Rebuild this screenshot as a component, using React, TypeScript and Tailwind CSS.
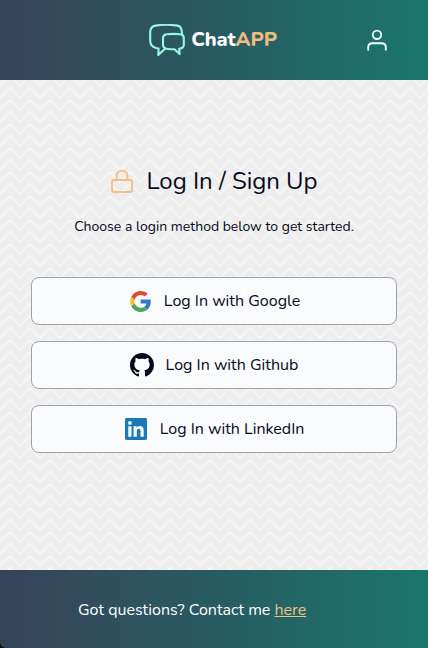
import React from "react";

function ChatLogo() {
  return (
    <svg className="h-8 w-[36px] shrink-0" viewBox="0 0 36 32" fill="none" stroke="#99f6e4" strokeWidth="2.100" strokeLinejoin="round" strokeLinecap="round">
      <path d="M33 9.500C32.800 4 31.500 2 28.500 1.600C21.500 .7 12 .7 6.500 1.600C3 2.200 1.300 4.500 1.200 8V16.500C1.200 20.500 3.200 23 7 24L9.600 24.500L9.300 31L16 24.800" />
      <path d="M17.500 10.200Q24.500 9.500 31.500 10.200Q34.800 10.800 34.800 14V21Q34.800 24 30.200 24.800L30.600 30L25.500 25.300Q21 25.300 17.500 24.700Q14 24 14 20.800V14Q14 10.800 17.500 10.200Z" />
    </svg>
  );
}

function UserIcon() {
  return (
    <svg className="size-6" viewBox="0 0 24 24" fill="none" stroke="#effffc" strokeWidth="1.900" strokeLinecap="round">
      <circle cx="12" cy="6.800" r="4.200" />
      <path d="M3.200 21.700V19.300Q3.200 15.200 7.500 15.200H16.500Q20.800 15.200 20.800 19.300V21.700" />
    </svg>
  );
}

function LockIcon() {
  return (
    <svg className="size-6 shrink-0" viewBox="0 0 24 24" fill="none" stroke="#f8bd80" strokeWidth="1.800" strokeLinejoin="round">
      <rect x="2" y="11" width="20" height="12" rx="2" />
      <path d="M6.600 11V7a5.400 5.400 0 0 1 10.800 0V11" />
    </svg>
  );
}

function GoogleIcon() {
  return (
    <svg className="size-[21px] shrink-0" viewBox="0 0 256 262">
      <path fill="#2f78c8" d="M255.878 133.451c0-10.734-.871-18.567-2.756-26.690H130.550v48.448h71.947c-1.450 12.040-9.283 30.172-26.690 42.356l-.244 1.622 38.755 30.023 2.685.268c24.659-22.774 38.875-56.282 38.875-96.027" />
      <path fill="#4ba85a" d="M130.550 261.100c35.248 0 64.839-11.605 86.453-31.622l-41.196-31.913c-11.024 7.688-25.820 13.055-45.257 13.055-34.523 0-63.824-22.773-74.269-54.250l-1.531.130-40.298 31.187-.527 1.465C35.393 231.798 79.490 261.100 130.550 261.100" />
      <path fill="#f7bd3b" d="M56.281 156.370c-2.756-8.123-4.351-16.827-4.351-25.820 0-8.994 1.595-17.697 4.206-25.820l-.073-1.730L15.260 71.312l-1.335.635C5.077 89.644 0 109.517 0 130.550s5.077 40.905 13.925 58.602l42.356-32.782" />
      <path fill="#e44b31" d="M130.550 50.479c24.514 0 41.050 10.589 50.479 19.438l36.844-35.974C195.245 12.910 165.798 0 130.550 0 79.490 0 35.393 29.301 13.925 71.947l42.211 32.783c10.590-31.477 39.891-54.251 74.414-54.251" />
    </svg>
  );
}

function GithubIcon() {
  return (
    <svg className="size-[24px] shrink-0" viewBox="0 0 16 16" fill="#07091b">
      <path d="M8 0C3.580 0 0 3.580 0 8c0 3.540 2.290 6.530 5.470 7.590.4.070.55-.170.55-.380 0-.190-.010-.820-.010-1.490-2.010.370-2.530-.490-2.690-.940-.090-.230-.480-.940-.820-1.130-.280-.150-.680-.520-.010-.530.630-.010 1.080.580 1.230.820.720 1.210 1.870.870 2.330.660.070-.520.280-.870.510-1.070-1.780-.200-3.640-.890-3.640-3.950 0-.870.310-1.590.820-2.150-.080-.200-.360-1.020.080-2.120 0 0 .670-.210 2.200.820.640-.180 1.320-.270 2-.270s1.360.090 2 .270c1.530-1.040 2.200-.820 2.200-.820.440 1.100.160 1.920.080 2.120.510.560.820 1.270.820 2.150 0 3.070-1.870 3.750-3.650 3.950.290.250.540.730.540 1.480 0 1.070-.010 1.930-.010 2.200 0 .210.150.460.550.380A8.010 8.010 0 0 0 16 8c0-4.420-3.580-8-8-8z" />
    </svg>
  );
}

function LinkedInIcon() {
  return (
    <svg className="size-[22px] shrink-0" viewBox="0 0 24 24">
      <rect width="24" height="24" rx="1.600" fill="#1b79b5" />
      <path fill="#f8fdff" d="M3.600 9h3.500v11.400H3.600zM5.350 3.300a2.060 2.060 0 1 1 0 4.120 2.060 2.060 0 0 1 0-4.120zM9.350 9h3.400v1.560h.05c.48-.9 1.640-1.850 3.370-1.850 3.600 0 4.270 2.370 4.270 5.460v6.250h-3.560v-5.550c0-1.320-.02-3.020-1.850-3.020-1.850 0-2.130 1.440-2.130 2.940v5.630H9.350z" />
    </svg>
  );
}

function Zigzag() {
  return (
    <svg className="absolute inset-0 h-full w-full" aria-hidden="true">
      <defs>
        <pattern id="zigzag" y="8" width="20" height="12" patternUnits="userSpaceOnUse">
          <rect width="20" height="12" fill="#ededed" />
          <g fill="none" stroke="#f6f6f6" strokeWidth="2">
            <path d="M-2 -4L0 -2L10 -12L20 -2L22 -4M-2 8L0 10L10 0L20 10L22 8M-2 20L0 22L10 12L20 22L22 20" />
          </g>
          <g fill="none" stroke="#f0f0f0" strokeWidth="1.500">
            <path d="M-2 -8L0 -6L10 -16L20 -6L22 -8M-2 4L0 6L10 -4L20 6L22 4M-2 16L0 18L10 8L20 18L22 16" />
          </g>
        </pattern>
      </defs>
      <rect width="100%" height="100%" fill="url(#zigzag)" />
    </svg>
  );
}

const providers = [
  { name: "Google", icon: <GoogleIcon />, layout: "gap-[13px] pl-0.5" },
  { name: "Github", icon: <GithubIcon />, layout: "gap-3" },
  { name: "LinkedIn", icon: <LinkedInIcon />, layout: "gap-[13px] pl-px" },
];

export default function App() {
  return (
    <div className="flex h-[648px] w-full flex-col overflow-hidden bg-[#ededed] font-['Nunito','Lato',sans-serif] text-[#07091b]">
      <header className="grid h-20 shrink-0 grid-cols-[1fr_auto_1fr] items-center bg-linear-to-r from-[#35435a] via-[#275b61] to-[#18776c]">
        <span />
        <div className="flex items-center gap-[6px] pr-0.5">
          <ChatLogo />
          <span className="text-xl font-extrabold tracking-[-0.1px] text-white">Chat<span className="text-[#efbb7f]">APP</span></span>
        </div>
        <button aria-label="Account" className="mr-[39px] justify-self-end"><UserIcon /></button>
      </header>
      <main className="relative flex-1">
        <Zigzag />
        <div className="relative flex flex-col items-center px-[31px] pt-[83px]">
          <div className="flex items-center gap-3">
            <LockIcon />
            <h1 className="whitespace-nowrap text-2xl leading-9">Log In / Sign Up</h1>
          </div>
          <p className="mt-[18px] whitespace-nowrap text-sm">Choose a login method below to get started.</p>
          <div className="mt-10 flex w-full flex-col gap-4">
            {providers.map((p) => (
              <button key={p.name} className={`flex h-12 w-full items-center justify-center rounded-lg border border-[#9ca3af] bg-[#fafbfd] ${p.layout}`}>
                {p.icon}
                <span className="whitespace-nowrap text-base">Log In with {p.name}</span>
              </button>
            ))}
          </div>
        </div>
      </main>
      <footer className="h-[78px] shrink-0 bg-[#0a0b10]">
        <div className="flex h-full items-center rounded-bl-[6px] bg-linear-to-r from-[#35435a] via-[#275b61] to-[#18776c] pt-0.5 pl-[78px] text-white">
          <p className="whitespace-nowrap text-base">Got questions? Contact me <a href="#" className="text-[#edc083] underline">here</a></p>
        </div>
      </footer>
    </div>
  );
}
